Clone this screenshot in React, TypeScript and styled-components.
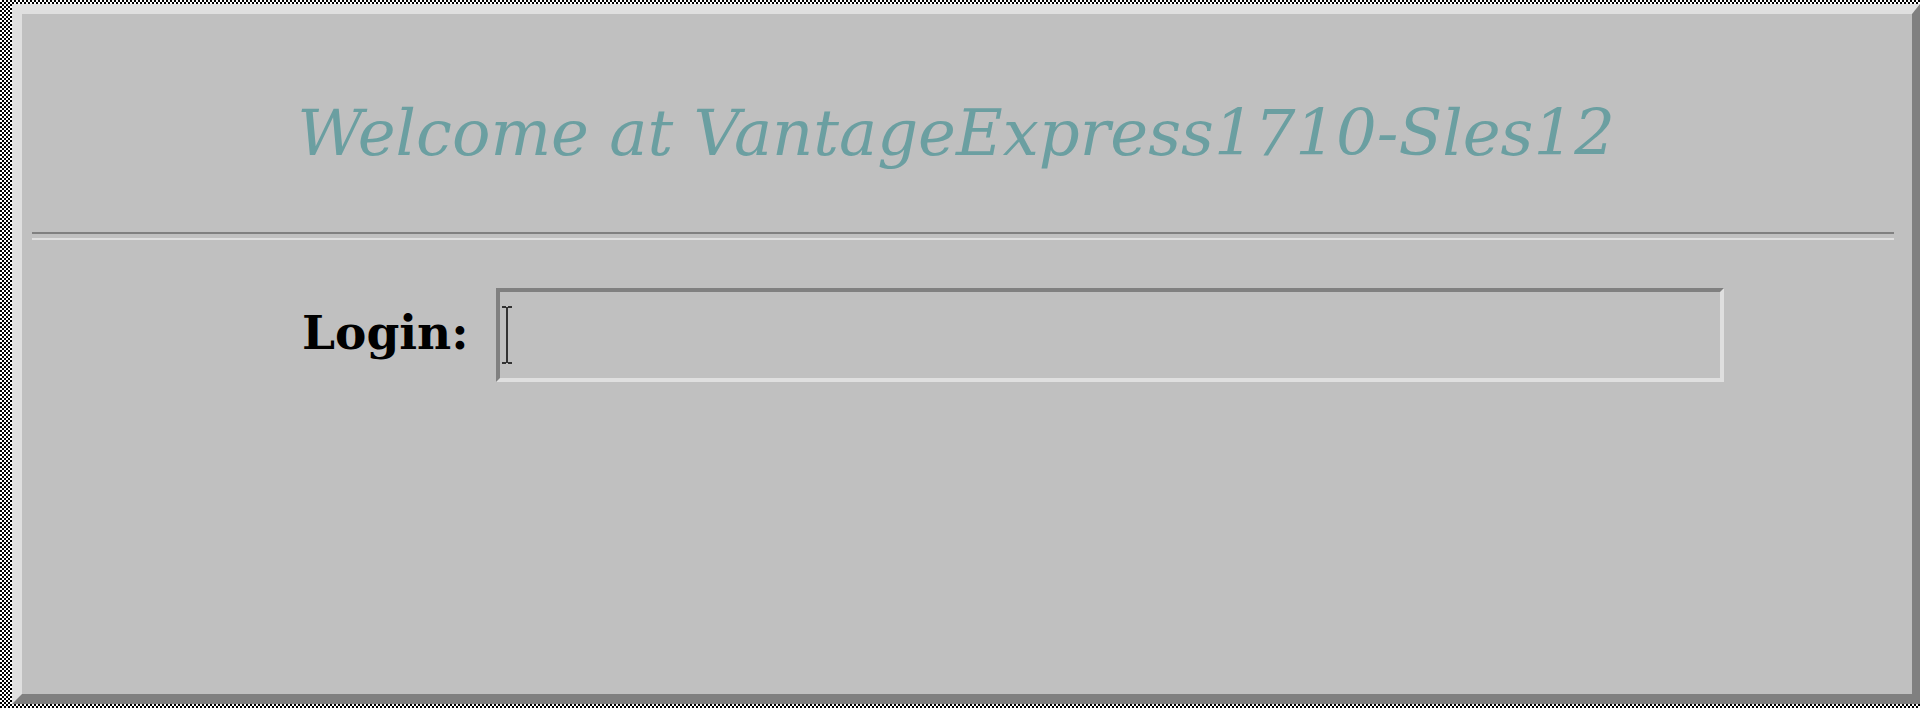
import React from "react";
import styled, { createGlobalStyle } from "styled-components";

const Global = createGlobalStyle`
  html, body {
    margin: 0;
    padding: 0;
  }
  body {
    width: 1920px;
    height: 708px;
    box-sizing: border-box;
    padding: 4px 0 4px 12px;
    background-color: #ffffff;
    background-image:
      linear-gradient(45deg, #000 25%, transparent 25%, transparent 75%, #000 75%),
      linear-gradient(45deg, #000 25%, transparent 25%, transparent 75%, #000 75%);
    background-size: 4px 4px;
    background-position: 0 0, 2px 2px;
    overflow: hidden;
  }
`;

const Frame = styled.div`
  box-sizing: border-box;
  width: 1908px;
  height: 700px;
  background: #c0c0c0;
  border-style: solid;
  border-width: 10px 8px 10px 10px;
  border-color: #dfdfdf #808080 #808080 #dfdfdf;
  display: flex;
  flex-direction: column;
`;

const Header = styled.div`
  box-sizing: border-box;
  height: 218px;
  display: flex;
  align-items: center;
  justify-content: center;
  padding: 20px 22px 0 0;
`;

const Title = styled.h1`
  margin: 0;
  font-family: "DejaVu Serif", serif;
  font-style: italic;
  font-weight: normal;
  font-size: 64px;
  line-height: 1;
  color: #6b9fa1;
  white-space: nowrap;
`;

const Separator = styled.hr`
  margin: 0 18px 0 10px;
  height: 4px;
  border: 0;
  border-top: 2px solid #808080;
  border-bottom: 2px solid #dfdfdf;
`;

const Row = styled.div`
  display: flex;
  align-items: center;
  margin-top: 48px;
  padding-left: 280px;
`;

const Label = styled.label`
  flex: 0 0 194px;
  padding-bottom: 5px;
  font-family: "DejaVu Serif", serif;
  font-weight: bold;
  font-size: 47px;
  color: #000;
  white-space: nowrap;
`;

const Field = styled.div`
  position: relative;
  box-sizing: border-box;
  width: 1228px;
  height: 94px;
  border-style: solid;
  border-width: 4px;
  border-color: #808080 #dfdfdf #dfdfdf #808080;
  background: #c0c0c0;
`;

const Input = styled.input`
  box-sizing: border-box;
  width: 100%;
  height: 100%;
  border: 0;
  outline: none;
  background: transparent;
  font-family: "DejaVu Serif", serif;
  font-size: 40px;
  padding: 0 10px;
`;

const Cursor = styled.svg`
  position: absolute;
  left: 2px;
  top: 14px;
  pointer-events: none;
`;

export default function App() {
  return (
    <>
      <Global />
      <Frame>
        <Header>
          <Title>Welcome at VantageExpress1710-Sles12</Title>
        </Header>
        <Separator />
        <Row>
          <Label htmlFor="login">Login:</Label>
          <Field>
            <Input id="login" type="text" />
            <Cursor width="10" height="58" viewBox="0 0 10 58">
              <rect x="0" y="0" width="4" height="2" fill="#333" />
              <rect x="6" y="0" width="4" height="2" fill="#333" />
              <rect x="4" y="1" width="2" height="56" fill="#333" />
              <rect x="0" y="56" width="4" height="2" fill="#333" />
              <rect x="6" y="56" width="4" height="2" fill="#333" />
            </Cursor>
          </Field>
        </Row>
      </Frame>
    </>
  );
}
